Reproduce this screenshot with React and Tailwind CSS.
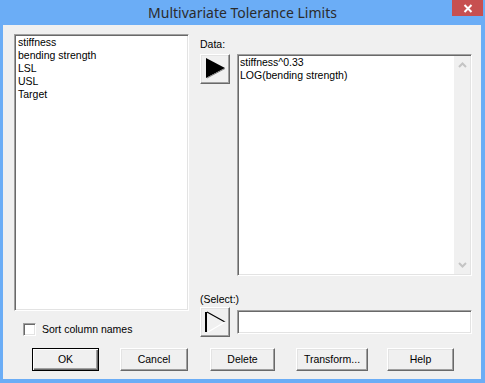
const font = { fontFamily: '"Liberation Sans", Arial, sans-serif' };

const sunken =
  'border border-t-[#a0a0a0] border-l-[#a0a0a0] border-r-white border-b-white shadow-[inset_1px_1px_0_#696969,inset_-1px_-1px_0_#e3e3e3] bg-white';
const raised =
  'border border-t-white border-l-white border-r-[#696969] border-b-[#696969] shadow-[inset_-1px_-1px_0_#a0a0a0,inset_1px_1px_0_#e3e3e3] bg-[#f0f0f0]';

function Btn({ label, w, ml, def }) {
  const cls = def
    ? 'border border-black shadow-[inset_1px_1px_0_#fff,inset_-1px_-1px_0_#696969,inset_-2px_-2px_0_#a0a0a0] bg-[#f0f0f0]'
    : raised;
  return (
    <div className={`${cls} ${w} ${ml} h-[23px] flex items-center justify-center text-[10.5px] text-black`}>
      {label}
    </div>
  );
}

export default function App() {
  return (
    <div className="w-[485px] h-[383px] bg-[#6badf6] flex flex-col select-none" style={font}>
      {/* Title bar */}
      <div className="relative h-[25px] flex items-center justify-center shrink-0">
        <span
          className="text-[14px] text-[#2b2b2b] leading-none"
          style={{ fontFamily: '"Noto Sans", "Liberation Sans", sans-serif' }}
        >
          Multivariate Tolerance Limits
        </span>
        <div className="absolute right-[2px] top-0 w-[31px] h-[16px] bg-[#c75050] flex items-center justify-center">
          <svg width="10" height="9" viewBox="0 0 10 9">
            <path d="M1.5 1 L8.5 8 M8.5 1 L1.5 8" stroke="#fff" strokeWidth="2" />
          </svg>
        </div>
      </div>

      {/* Client area */}
      <div className="ml-[3px] mr-[4px] mb-[4px] flex-1 bg-[#f0f0f0] flex flex-col">
        <div className="flex">
          {/* Left column */}
          <div className="ml-[11px] mt-[9px] flex flex-col">
            <div className={`${sunken} w-[175px] h-[277px] pl-[3px] pt-[1px] text-[10.5px] leading-[13px] text-black`}>
              <div>stiffness</div>
              <div>bending strength</div>
              <div>LSL</div>
              <div>USL</div>
              <div>Target</div>
            </div>
            <div className="mt-[12px] ml-[9px] flex items-center">
              <div className={`${sunken} w-[13px] h-[13px]`} />
              <span className="ml-[6px] text-[10.5px] leading-[13px] text-black">Sort column names</span>
            </div>
          </div>

          {/* Right column */}
          <div className="ml-[11px] flex flex-col">
            <div className="mt-[13px] h-[13px] text-[10.5px] leading-[13px] text-black">Data:</div>
            <div className="mt-[3px] flex">
              <div className={`${raised} w-[30px] h-[30px]`}>
                <svg width="28" height="28" viewBox="0 0 28 28">
                  <polygon points="5,3 24,13 5,23" fill="#000" />
                  <path d="M24 13.5 L6 23" stroke="#808080" strokeWidth="1" />
                </svg>
              </div>
              <div className={`${sunken} ml-[7px] w-[235px] h-[222px] flex`}>
                <div className="flex-1 pl-[2px] pt-[1px] text-[10.5px] leading-[13px] text-black">
                  <div>stiffness^0.33</div>
                  <div>LOG(bending strength)</div>
                </div>
                <div className="w-[16px] mr-[1px] my-[1px] bg-[#f0f0f0] flex flex-col justify-between items-center py-[6px]">
                  <svg width="9" height="6" viewBox="0 0 9 6">
                    <path d="M1 5 L4.5 1.5 L8 5" stroke="#c4c4c4" strokeWidth="2" fill="none" />
                  </svg>
                  <svg width="9" height="6" viewBox="0 0 9 6">
                    <path d="M1 1 L4.5 4.5 L8 1" stroke="#c4c4c4" strokeWidth="2" fill="none" />
                  </svg>
                </div>
              </div>
            </div>
            <div className="mt-[17px] h-[13px] text-[10.5px] leading-[13px] text-black">(Select:)</div>
            <div className="mt-[1px] flex items-start">
              <div className={`${raised} w-[30px] h-[30px]`}>
                <svg width="28" height="28" viewBox="0 0 28 28">
                  <path d="M6 4 L24 14" stroke="#000" strokeWidth="1.2" />
                  <path d="M24 14 L7 24" stroke="#fff" strokeWidth="1.2" />
                  <path d="M5 4 L5 24" stroke="#000" strokeWidth="2" />
                </svg>
              </div>
              <div className={`${sunken} ml-[7px] mt-[3px] w-[235px] h-[24px]`} />
            </div>
          </div>
        </div>

        {/* Buttons */}
        <div className="mt-[11px] flex">
          <Btn label="OK" w="w-[67px]" ml="ml-[29px]" def />
          <Btn label="Cancel" w="w-[68px]" ml="ml-[21px]" />
          <Btn label="Delete" w="w-[65px]" ml="ml-[22px]" />
          <Btn label="Transform..." w="w-[72px]" ml="ml-[21px]" />
          <Btn label="Help" w="w-[67px]" ml="ml-[19px]" />
        </div>
      </div>
    </div>
  );
}
